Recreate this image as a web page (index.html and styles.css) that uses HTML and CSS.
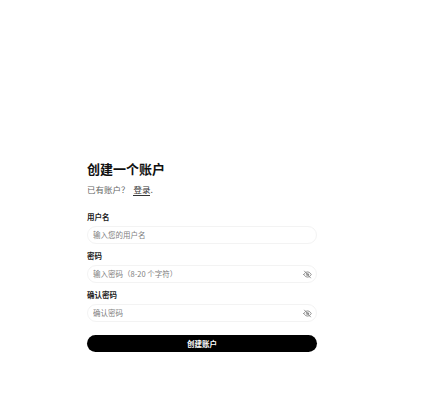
FILE: index.html
```html
<!DOCTYPE html>
<html lang="zh">
<head>
  <meta charset="UTF-8" />
  <title>创建一个账户</title>
  <link rel="stylesheet" href="styles.css">
</head>
<body>
  <main class="signup">
    <h1>创建一个账户</h1>
    <p class="login-hint">已有账户？ <a href="#">登录</a>.</p>

    <div class="field">
      <label>用户名</label>
      <div class="input-box">
        <input type="text" placeholder="输入您的用户名" />
      </div>
    </div>

    <div class="field">
      <label>密码</label>
      <div class="input-box">
        <input type="password" placeholder="输入密码（8-20 个字符）" />
        <svg class="eye" viewBox="0 0 24 24" fill="none" stroke="currentColor" stroke-width="2.4" stroke-linecap="round" stroke-linejoin="round">
          <path d="M2 12s3.6-7 10-7 10 7 10 7-3.6 7-10 7-10-7-10-7z" />
          <circle cx="12" cy="12" r="3" />
          <path d="M4 3l16 18" />
        </svg>
      </div>
    </div>

    <div class="field">
      <label>确认密码</label>
      <div class="input-box">
        <input type="password" placeholder="确认密码" />
        <svg class="eye" viewBox="0 0 24 24" fill="none" stroke="currentColor" stroke-width="2.4" stroke-linecap="round" stroke-linejoin="round">
          <path d="M2 12s3.6-7 10-7 10 7 10 7-3.6 7-10 7-10-7-10-7z" />
          <circle cx="12" cy="12" r="3" />
          <path d="M4 3l16 18" />
        </svg>
      </div>
    </div>

    <button class="submit-btn">创建账户</button>
  </main>
</body>
</html>
```

FILE: styles.css
```css
body {
  margin: 0;
  background: white;
  font-family: "Noto Sans CJK SC", "Noto Sans", sans-serif;
}
.signup {
  width: 230px;
  margin-left: 87px;
  padding-top: 159px;
}
h1 {
  margin: 0;
  font-size: 13px;
  line-height: 20px;
  font-weight: 700;
  color: #111;
}
.login-hint {
  margin: 4px 0 16px;
  font-size: 8.5px;
  line-height: 12px;
  color: #666;
}
.login-hint a {
  color: #333;
  margin-left: 2px;
  text-decoration: none;
  border-bottom: 1px solid #333;
}
.field {
  margin-bottom: 6px;
}
.field label {
  display: block;
  font-size: 7.5px;
  line-height: 11px;
  font-weight: 700;
  color: #222;
  margin-bottom: 4px;
}
.input-box {
  box-sizing: border-box;
  display: flex;
  align-items: center;
  height: 18px;
  padding: 0 4px 0 5px;
  border: 1px solid #f3f3f3;
  border-radius: 9px;
  background: white;
}
.input-box input {
  flex: 1;
  min-width: 0;
  padding: 0 0 1px;
  border: none;
  outline: none;
  font-family: inherit;
  font-size: 7.5px;
  background: none;
}
.input-box input::placeholder {
  color: #808080;
}
.eye {
  width: 9px;
  height: 9px;
  color: #888;
  flex: none;
}
.submit-btn {
  display: block;
  width: 100%;
  height: 17px;
  margin-top: 13px;
  padding: 0;
  border: none;
  border-radius: 9px;
  background: #000;
  color: white;
  font-family: inherit;
  font-size: 7.5px;
  font-weight: 700;
}
```
